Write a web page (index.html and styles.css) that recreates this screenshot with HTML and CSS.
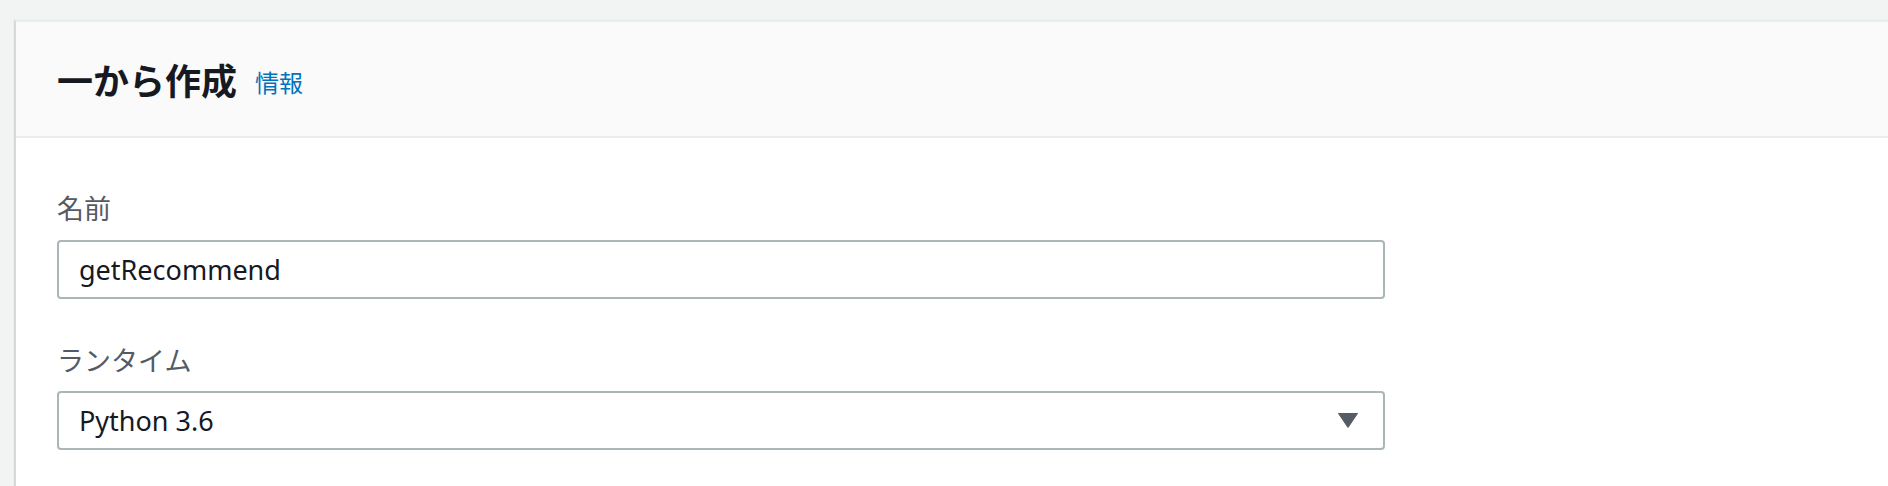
FILE: index.html
```html
<!DOCTYPE html>
<html lang="ja">
<head>
<meta charset="utf-8">
<link rel="stylesheet" href="styles.css">
</head>
<body>
<div class="page">
  <section class="card">
    <header class="card-header">
      <h2 class="title">一から作成</h2>
      <a class="info" href="#">情報</a>
    </header>
    <div class="card-body">
      <div class="field">
        <label class="label">名前</label>
        <div class="input">getRecommend</div>
      </div>
      <div class="field">
        <label class="label">ランタイム</label>
        <div class="input select">
          <span>Python 3.6</span>
          <svg class="caret" width="20" height="15" viewBox="0 0 20 15"><path d="M0.5 0.5 H19.5 L10 14.5 Z" fill="#545b64" stroke="#545b64" stroke-linejoin="round"/></svg>
        </div>
      </div>
    </div>
  </section>
</div>
</body>
</html>
```

FILE: styles.css
```css
html, body {
  margin: 0;
  padding: 0;
  background: #f2f3f3;
  height: 100%;
}
body {
  font-family: "Noto Sans", "Noto Sans CJK JP", sans-serif;
  color: #16191f;
}
.page {
  padding: 20px 0 0 15px;
  height: 100%;
  box-sizing: border-box;
}
.card {
  background: #ffffff;
  border-left: 1px solid #d5dbdb;
  border-top: 2px solid #eaeded;
  box-shadow: -1px 0 1px rgba(0, 28, 36, 0.12);
  height: 100%;
  box-sizing: border-box;
}
.card-header {
  height: 116px;
  box-sizing: border-box;
  background: #fafafa;
  border-bottom: 2px solid #eaeded;
  display: flex;
  align-items: center;
  padding-left: 41px;
}
.title {
  margin: 0;
  font-family: "Noto Sans CJK JP", sans-serif;
  font-weight: 700;
  font-size: 36px;
  line-height: 40px;
  color: #16191f;
}
.info {
  margin-left: 18px;
  margin-top: 4px;
  font-family: "Noto Sans CJK JP", sans-serif;
  font-size: 24px;
  color: #0073bb;
  text-decoration: none;
}
.card-body {
  padding: 52px 0 0 41px;
}
.field {
  width: 1328px;
}
.field + .field {
  margin-top: 43px;
}
.label {
  display: block;
  font-family: "Noto Sans CJK JP", sans-serif;
  font-size: 27px;
  line-height: 36px;
  color: #545b64;
  margin-bottom: 14px;
}
.field + .field .label {
  margin-bottom: 13px;
}
.input {
  height: 59px;
  box-sizing: border-box;
  border: 2px solid #aab7b8;
  border-radius: 4px;
  background: #fff;
  padding: 0 20px;
  display: flex;
  align-items: center;
  font-size: 27px;
  color: #16191f;
}
.select {
  height: 59px;
  justify-content: space-between;
  padding-right: 25px;
}
.caret {
  display: block;
}
```
